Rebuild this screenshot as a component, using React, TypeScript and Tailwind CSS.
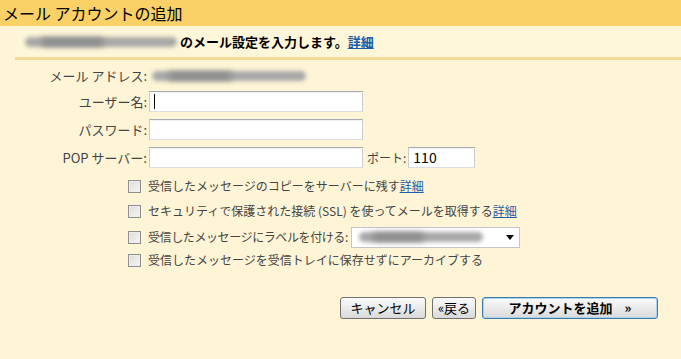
const font = { fontFamily: '"Noto Sans CJK JP", "Liberation Sans", sans-serif' };

function Blur({ w, className = '' }: { w: number; className?: string }) {
  return (
    <span className={`relative inline-block h-[14px] align-middle ${className}`} style={{ width: w }}>
      <span className="absolute inset-x-[3px] top-[2px] h-[10px] rounded-full bg-[#a8a8a8] blur-[2px]" />
      <span className="absolute left-[12%] w-[40%] top-[3px] h-[8px] rounded-full bg-[#8a8a8a] blur-[3px]" />
    </span>
  );
}

function TextInput({ value = '', w = 214, caret = false }: { value?: string; w?: number; caret?: boolean }) {
  return (
    <div
      className="flex h-[21px] items-center border border-t-[#a5acb2] border-x-[#c9ccd0] border-b-[#dde0e3] bg-white pl-[4px] text-[14px] text-black shadow-[inset_0_1px_1px_rgba(0,0,0,0.06)]"
      style={{ width: w }}
    >
      {caret && <span className="h-[15px] w-[1px] bg-black" />}
      {value}
    </div>
  );
}

function Check() {
  return (
    <span className="inline-block h-[13px] w-[13px] border border-[#8e8f8f] bg-gradient-to-br from-[#dcdcdc] to-[#f6f6f6] shadow-[inset_0_0_0_1px_#eee]" />
  );
}

function Link({ children }: { children: React.ReactNode }) {
  return <span className="text-[#1a5ca6] underline">{children}</span>;
}

function Btn({ children, w, primary = false }: { children: React.ReactNode; w: number; primary?: boolean }) {
  return (
    <button
      className={`flex h-[22px] items-center justify-center rounded-[3px] border bg-gradient-to-b from-[#fafafa] via-[#ebebeb] to-[#d9d9d9] text-[13px] text-black ${
        primary ? 'border-[#3d7bad] font-bold shadow-[inset_0_0_0_1px_#a6d3ee]' : 'border-[#707070]'
      }`}
      style={{ width: w }}
    >
      {children}
    </button>
  );
}

export default function App() {
  return (
    <div className="h-[359px] w-[681px] overflow-hidden bg-[#fff5d6] text-[13px] text-[#222]" style={font}>
      <div className="flex h-[26px] items-center bg-[#f9d166] pl-[3px] text-[16px] text-black">
        メール アカウントの追加
      </div>
      <div className="ml-[15px] flex h-[34px] items-center border-b-[3px] border-[#f4dc98] bg-[#fef6d8] pl-[7px] font-bold text-black">
        <Blur w={158} />
        <span>のメール設定を入力します。</span>
        <Link>詳細</Link>
      </div>

      <div className="grid grid-cols-[147px_auto] items-center gap-x-[2px] pt-[6px]">
        <div className="h-[20px] text-right leading-[20px] text-[#444]">メール アドレス:</div>
        <div className="flex h-[20px] items-center">
          <Blur w={160} />
        </div>

        <div className="mt-[5px] text-right text-[#444]">ユーザー名:</div>
        <div className="mt-[5px]">
          <TextInput caret />
        </div>

        <div className="mt-[7px] text-right text-[#444]">パスワード:</div>
        <div className="mt-[7px]">
          <TextInput />
        </div>

        <div className="mt-[7px] text-right text-[#444]">POP サーバー:</div>
        <div className="mt-[7px] flex items-center">
          <TextInput />
          <span className="ml-[4px] mr-[2px] text-[12px] text-[#444]">ポート:</span>
          <TextInput value="110" w={67} />
        </div>
      </div>

      <div className="flex flex-col pl-[128px] pt-[6px] text-[12px] text-[#444]">
        <div className="flex h-[24px] items-center gap-[7px]">
          <Check />
          <span>
            受信したメッセージのコピーをサーバーに残す<Link>詳細</Link>
          </span>
        </div>
        <div className="flex h-[26px] items-center gap-[7px]">
          <Check />
          <span>
            セキュリティで保護された接続 (SSL) を使ってメールを取得する<Link>詳細</Link>
          </span>
        </div>
        <div className="flex h-[26px] items-center gap-[7px]">
          <Check />
          <span className="tracking-[-0.4px]">受信したメッセージにラベルを付ける:</span>
          <div className="-ml-[4px] flex h-[21px] w-[169px] items-center justify-between border border-[#c2c5c9] bg-white pl-[4px] pr-[5px]">
            <Blur w={130} />
            <svg width="8" height="5" viewBox="0 0 8 5">
              <polygon points="0,0 8,0 4,5" fill="#000" />
            </svg>
          </div>
        </div>
        <div className="flex h-[20px] items-center gap-[7px]">
          <Check />
          <span>受信したメッセージを受信トレイに保存せずにアーカイブする</span>
        </div>
      </div>

      <div className="flex items-center gap-[6px] pl-[340px] pt-[27px]">
        <Btn w={86}>キャンセル</Btn>
        <Btn w={44}>«戻る</Btn>
        <Btn w={176} primary>
          アカウントを追加 <span className="ml-[12px]">»</span>
        </Btn>
      </div>
    </div>
  );
}
